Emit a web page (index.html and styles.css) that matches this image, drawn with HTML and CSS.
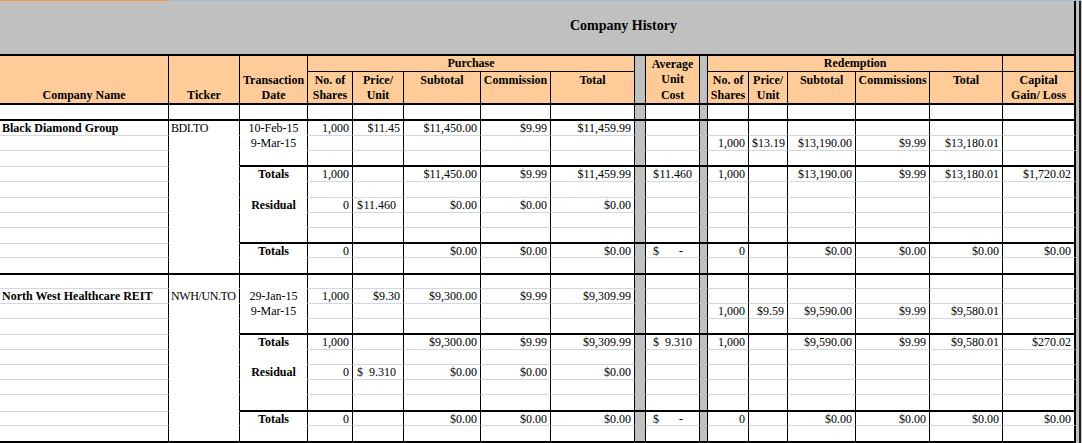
FILE: index.html
```html
<!DOCTYPE html>
<html lang="en">
<head>
<meta charset="utf-8">
<title>Company History</title>
<link rel="stylesheet" href="styles.css">
</head>
<body>
<div class="sheet">
  <div class="main">
    <div class="band"><h1 class="title">Company History</h1></div>
    <table class="grid">
      <colgroup>
        <col class="k0"><col class="k1"><col class="k2"><col class="k3"><col class="k4"><col class="k5"><col class="k6"><col class="k7"><col class="k8"><col class="k9"><col class="k10"><col class="k11"><col class="k12"><col class="k13"><col class="k14"><col class="k15"><col class="k16">
      </colgroup>
      <thead>
        <tr class="h16">
          <th rowspan="2" class="hb">Company Name</th>
          <th rowspan="2" class="hb">Ticker</th>
          <th rowspan="2" class="hb">Transaction<br>Date</th>
          <th colspan="5" class="grp">Purchase</th>
          <th rowspan="2" class="gy"></th>
          <th rowspan="2" class="hb avg">Average<br>Unit<br>Cost</th>
          <th rowspan="2" class="gy"></th>
          <th colspan="5" class="grp">Redemption</th>
          <th class="grp"></th>
        </tr>
        <tr class="h33">
          <th>No. of<br>Shares</th>
          <th>Price/<br>Unit</th>
          <th>Subtotal</th>
          <th>Commission</th>
          <th>Total</th>
          <th>No. of<br>Shares</th>
          <th>Price/<br>Unit</th>
          <th>Subtotal</th>
          <th>Commissions</th>
          <th>Total</th>
          <th>Capital<br>Gain/ Loss</th>
        </tr>
      </thead>
      <tbody class="data">
        <tr class="h16 end"><td></td><td></td><td></td><td></td><td></td><td></td><td></td><td></td><td></td><td></td><td></td><td></td><td></td><td></td><td></td><td></td><td></td></tr>

        <tr class="h15"><td class="b">Black Diamond Group</td><td>BDI.TO</td><td>10-Feb-15</td><td>1,000</td><td>$11.45</td><td>$11,450.00</td><td>$9.99</td><td>$11,459.99</td><td></td><td></td><td></td><td></td><td></td><td></td><td></td><td></td><td></td></tr>
        <tr class="h15"><td></td><td></td><td>9-Mar-15</td><td></td><td></td><td></td><td></td><td></td><td></td><td></td><td></td><td>1,000</td><td>$13.19</td><td>$13,190.00</td><td>$9.99</td><td>$13,180.01</td><td></td></tr>
        <tr class="h16 sep"><td></td><td></td><td></td><td></td><td></td><td></td><td></td><td></td><td></td><td></td><td></td><td></td><td></td><td></td><td></td><td></td><td></td></tr>
        <tr class="h15"><td></td><td></td><td class="b">Totals</td><td>1,000</td><td></td><td>$11,450.00</td><td>$9.99</td><td>$11,459.99</td><td></td><td class="acc"><span class="cur">$</span>11.460</td><td></td><td>1,000</td><td></td><td>$13,190.00</td><td>$9.99</td><td>$13,180.01</td><td>$1,720.02</td></tr>
        <tr class="h16"><td></td><td></td><td></td><td></td><td></td><td></td><td></td><td></td><td></td><td></td><td></td><td></td><td></td><td></td><td></td><td></td><td></td></tr>
        <tr class="h15"><td></td><td></td><td class="b">Residual</td><td>0</td><td class="acc pu"><span class="cur">$</span>11.460</td><td>$0.00</td><td>$0.00</td><td>$0.00</td><td></td><td></td><td></td><td></td><td></td><td></td><td></td><td></td><td></td></tr>
        <tr class="h15"><td></td><td></td><td></td><td></td><td></td><td></td><td></td><td></td><td></td><td></td><td></td><td></td><td></td><td></td><td></td><td></td><td></td></tr>
        <tr class="h16 sep"><td></td><td></td><td></td><td></td><td></td><td></td><td></td><td></td><td></td><td></td><td></td><td></td><td></td><td></td><td></td><td></td><td></td></tr>
        <tr class="h14"><td></td><td></td><td class="b">Totals</td><td>0</td><td></td><td>$0.00</td><td>$0.00</td><td>$0.00</td><td></td><td class="acc dash"><span class="cur">$</span>-</td><td></td><td>0</td><td></td><td>$0.00</td><td>$0.00</td><td>$0.00</td><td>$0.00</td></tr>
        <tr class="h17 end"><td></td><td></td><td></td><td></td><td></td><td></td><td></td><td></td><td></td><td></td><td></td><td></td><td></td><td></td><td></td><td></td><td></td></tr>

        <tr class="h14"><td></td><td></td><td></td><td></td><td></td><td></td><td></td><td></td><td></td><td></td><td></td><td></td><td></td><td></td><td></td><td></td><td></td></tr>
        <tr class="h15"><td class="b">North West Healthcare REIT</td><td>NWH/UN.TO</td><td>29-Jan-15</td><td>1,000</td><td>$9.30</td><td>$9,300.00</td><td>$9.99</td><td>$9,309.99</td><td></td><td></td><td></td><td></td><td></td><td></td><td></td><td></td><td></td></tr>
        <tr class="h15"><td></td><td></td><td>9-Mar-15</td><td></td><td></td><td></td><td></td><td></td><td></td><td></td><td></td><td>1,000</td><td>$9.59</td><td>$9,590.00</td><td>$9.99</td><td>$9,580.01</td><td></td></tr>
        <tr class="h16 sep"><td></td><td></td><td></td><td></td><td></td><td></td><td></td><td></td><td></td><td></td><td></td><td></td><td></td><td></td><td></td><td></td><td></td></tr>
        <tr class="h15"><td></td><td></td><td class="b">Totals</td><td>1,000</td><td></td><td>$9,300.00</td><td>$9.99</td><td>$9,309.99</td><td></td><td class="acc"><span class="cur">$</span>9.310</td><td></td><td>1,000</td><td></td><td>$9,590.00</td><td>$9.99</td><td>$9,580.01</td><td>$270.02</td></tr>
        <tr class="h15"><td></td><td></td><td></td><td></td><td></td><td></td><td></td><td></td><td></td><td></td><td></td><td></td><td></td><td></td><td></td><td></td><td></td></tr>
        <tr class="h15"><td></td><td></td><td class="b">Residual</td><td>0</td><td class="acc pu"><span class="cur">$</span>9.310</td><td>$0.00</td><td>$0.00</td><td>$0.00</td><td></td><td></td><td></td><td></td><td></td><td></td><td></td><td></td><td></td></tr>
        <tr class="h15"><td></td><td></td><td></td><td></td><td></td><td></td><td></td><td></td><td></td><td></td><td></td><td></td><td></td><td></td><td></td><td></td><td></td></tr>
        <tr class="h17 sep"><td></td><td></td><td></td><td></td><td></td><td></td><td></td><td></td><td></td><td></td><td></td><td></td><td></td><td></td><td></td><td></td><td></td></tr>
        <tr class="h14"><td></td><td></td><td class="b">Totals</td><td>0</td><td></td><td>$0.00</td><td>$0.00</td><td>$0.00</td><td></td><td class="acc dash"><span class="cur">$</span>-</td><td></td><td>0</td><td></td><td>$0.00</td><td>$0.00</td><td>$0.00</td><td>$0.00</td></tr>
        <tr class="h17 end"><td></td><td></td><td></td><td></td><td></td><td></td><td></td><td></td><td></td><td></td><td></td><td></td><td></td><td></td><td></td><td></td><td></td></tr>
      </tbody>
    </table>
  </div>
  <div class="edge"></div>
</div>
</body>
</html>
```

FILE: styles.css
```css
* { box-sizing: border-box; }
html, body { margin: 0; padding: 0; background: #fff; }
body {
  font-family: "Liberation Serif", "Times New Roman", serif;
  color: #000;
}

.sheet {
  display: flex;
  width: 1082px;
  padding-top: 1px;
  background: linear-gradient(to right, #f79646 0 168px, #a6b9d3 168px) top left / 100% 1px no-repeat;
}
.main { width: 1076px; }
.edge {
  width: 6px;
  background: linear-gradient(to right, #c0c0c0 0 3px, #202020 3px 5px, #c8c8c8 5px);
}

.band {
  height: 55px;
  background: #c0c0c0;
  border-bottom: 2px solid #000;
  border-right: 2px solid #000;
  padding: 17px 0 0 570px;
}
.title {
  margin: 0;
  font-size: 14px;
  line-height: 16px;
  font-weight: bold;
  white-space: nowrap;
}

.grid {
  width: 1076px;
  table-layout: fixed;
  border-collapse: separate;
  border-spacing: 0;
  font-size: 12px;
}
.k0 { width: 169px; }
.k1 { width: 71px; }
.k2 { width: 68px; }
.k3 { width: 45px; }
.k4 { width: 51px; }
.k5 { width: 77px; }
.k6 { width: 70px; }
.k7 { width: 84px; }
.k8 { width: 11px; }
.k9 { width: 54px; }
.k10 { width: 8px; }
.k11 { width: 41px; }
.k12 { width: 39px; }
.k13 { width: 68px; }
.k14 { width: 74px; }
.k15 { width: 73px; }
.k16 { width: 73px; }

.grid th, .grid td {
  padding: 0;
  border-right: 1px solid #000;
  white-space: nowrap;
  overflow: hidden;
}
.grid tr > :last-child { border-right-width: 2px; }

.h14 { height: 14px; }
.h15 { height: 15px; }
.h16 { height: 16px; }
.h17 { height: 17px; }
.h33 { height: 33px; }

.grid th {
  background: #ffcc99;
  font-weight: bold;
  font-size: 12px;
  line-height: 15px;
  padding-top: 1px;
  text-align: center;
  vertical-align: top;
  border-bottom: 2px solid #000;
}
.grid th.grp {
  border-bottom-width: 1px;
  line-height: 15px;
  padding-top: 0;
  vertical-align: middle;
}
.grid th.hb { vertical-align: bottom; padding-top: 0; }
.grid th.avg { line-height: 15.5px; }
.grid th.gy { background: #c0c0c0; }

.grid td {
  background: #fff;
  font-size: 12px;
  line-height: 12px;
  vertical-align: middle;
  text-align: right;
  padding: 0 3px;
  border-bottom: 1px solid #d0d7e5;
}
.data td:nth-child(1) { text-align: left; padding-left: 2px; }
.data td:nth-child(2) { text-align: left; padding-left: 2px; letter-spacing: -0.4px; border-bottom-color: transparent; }
.data td:nth-child(3) { text-align: center; border-bottom-color: transparent; }
.data td:nth-child(9),
.data td:nth-child(11) { background: #c0c0c0; border-bottom-color: transparent; padding: 0; }
.data tr.sep td:nth-child(n+3) { border-bottom: 2px solid #000; }
.data tr.end td { border-bottom: 2px solid #000; }

.grid td.b { font-weight: bold; }
.grid td.acc { padding: 0 7px; }
.grid td.pu { padding-left: 4px; }
.grid td.dash { padding-right: 16px; }
.cur { float: left; }
```
